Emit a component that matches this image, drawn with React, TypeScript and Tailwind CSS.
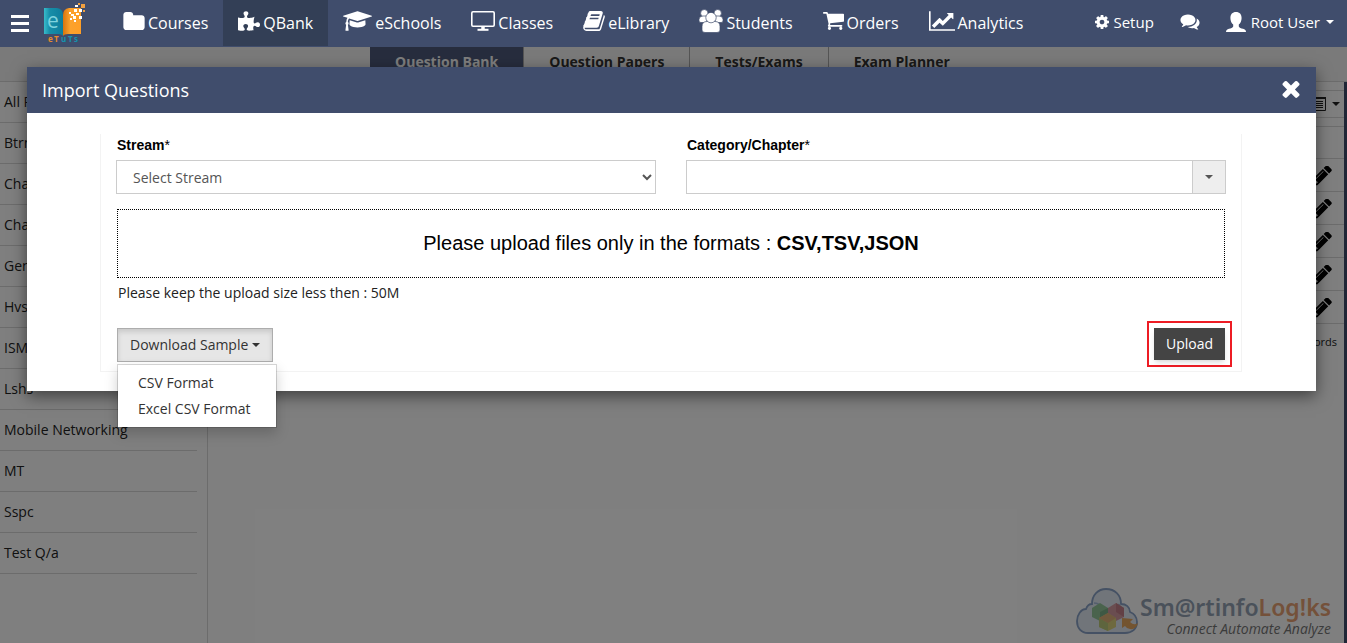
import type { ReactNode } from 'react'
import { FaPuzzlePiece } from 'react-icons/fa'

const paths = {
    folder: 'M1728 608v704q0 92-66 158t-158 66h-1216q-92 0-158-66t-66-158v-960q0-92 66-158t158-66h320q92 0 158 66t66 158v32h672q92 0 158 66t66 158z',
    school: 'M1774 836l18 316q4 69-82 128t-235 93.5-323 34.5-323-34.5-235-93.5-82-128l18-316 574 181q22 7 48 7t48-7zm530-324q0 23-22 31l-1120 352q-4 1-10 1t-10-1l-652-206q-43 34-71 111.5t-34 178.5q63 36 63 109 0 69-58 107l58 433q2 14-8 25-9 11-24 11h-192q-15 0-24-11-10-11-8-25l58-433q-58-38-58-107 0-73 65-111 11-207 98-330l-333-104q-22-8-22-31t22-31l1120-352q4-1 10-1t10 1l1120 352q22 8 22 31z',
    book: 'M1639 478q40 57 18 129l-275 906q-19 64-76.5 107.5t-122.5 43.5h-923q-77 0-148.5-53.5t-99.5-131.5q-24-67-2-127 0-4 3-27t4-37q1-8-3-21.5t-3-19.5q2-11 8-21t16.5-23.5 16.5-23.5q23-38 45-91.5t30-91.5q3-10 .5-30t-.5-28q3-11 17-28t17-23q21-36 42-92t25-90q1-9-2.5-32t.5-28q4-13 22-30.5t22-22.5q19-26 42.5-84.5t27.5-96.5q1-8-3-25.5t-2-26.5q2-8 9-18t18-23 17-21q8-12 16.5-30.5t15-35 16-36 19.5-32 26.5-23.5 36-11.5 47.5 5.5l-1 3q38-9 51-9h761q74 0 114 56t18 130l-274 906q-36 119-71.5 153.5t-128.5 34.5h-869q-27 0-38 15-11 16-1 43 24 70 144 70h923q29 0 56-15.5t35-41.5l300-987q7-22 5-57 38 15 59 43zm-1064 2q-4 13 2 22.5t20 9.5h608q13 0 25.5-9.5t16.5-22.5l21-64q4-13-2-22.5t-20-9.5h-608q-13 0-25.5 9.5t-16.5 22.5zm-83 256q-4 13 2 22.5t20 9.5h608q13 0 25.5-9.5t16.5-22.5l21-64q4-13-2-22.5t-20-9.5h-608q-13 0-25.5 9.5t-16.5 22.5z',
    cart: 'M704 1536q0 52-38 90t-90 38-90-38-38-90 38-90 90-38 90 38 38 90zm896 0q0 52-38 90t-90 38-90-38-38-90 38-90 90-38 90 38 38 90zm128-1088v512q0 24-16.5 42.5t-40.5 21.5l-1044 122q13 60 13 70 0 16-24 64h920q26 0 45 19t19 45-19 45-45 19h-1024q-26 0-45-19t-19-45q0-11 8-31.5t16-36 21.5-40 15.5-29.5l-177-823h-204q-26 0-45-19t-19-45 19-45 45-19h256q16 0 28.5 6.5t19.5 15.5 13 24.5 8 26 5.5 29.5 4.5 26h1201q26 0 45 19t19 45z',
    chart: 'M2048 1536v128h-2048v-1536h128v1408h1920zm-128-1248v435q0 21-19.5 29.5t-35.5-7.5l-121-121-633 633q-10 10-23 10t-23-10l-233-233-416 416-192-192 585-585q10-10 23-10t23 10l233 233 464-464-121-121q-16-16-7.5-35.5t29.5-19.5h435q14 0 23 9t9 23z',
    cog: 'M1152 896q0-106-75-181t-181-75-181 75-75 181 75 181 181 75 181-75 75-181zm512-109v222q0 12-8 23t-20 13l-185 28q-19 54-39 91 35 50 107 138 10 12 10 25t-9 23q-27 37-99 108t-94 71q-12 0-26-9l-138-108q-44 23-91 38-16 136-29 186-7 28-36 28h-222q-14 0-24.5-8.5t-11.5-21.5l-28-184q-49-16-90-37l-141 107q-10 9-25 9-14 0-25-11-126-114-165-168-7-10-7-23 0-12 8-23 15-21 51-66.5t54-70.5q-27-50-41-99l-183-27q-13-2-21-12.5t-8-23.5v-222q0-12 8-23t19-13l186-28q14-46 39-92-40-57-107-138-10-12-10-24 0-10 9-23 26-36 98.5-107.5t94.5-71.5q13 0 26 10l138 107q44-23 91-38 16-136 29-186 7-28 36-28h222q14 0 24.5 8.5t11.5 21.5l28 184q49 16 90 37l142-107q9-9 24-9 13 0 25 10 129 119 165 170 7 8 7 22 0 12-8 23-15 21-51 66.5t-54 70.5q26 50 41 98l183 28q13 2 21 12.5t8 23.5z',
    comments: 'M1408 768q0 139-94 257t-256.5 186.5-353.5 68.5q-86 0-176-16-124 88-278 128-36 9-86 16h-3q-11 0-20.5-8t-11.5-21q-1-3-1-6.5t.5-6.5 2-6l2.5-5 3.5-5.5 4-5 4.5-5 4-4.5q5-6 23-25t26-29.5 22.5-29 25-38.5 20.5-44q-124-72-195-177t-71-224q0-139 94-257t256.5-186.5 353.5-68.5 353.5 68.5 256.5 186.5 94 257zm384 256q0 120-71 224.5t-195 176.5q10 24 20.5 44t25 38.5 22.5 29 26 29.5 23 25q1 1 4 4.5t4.5 5 4 5 3.5 5.5l2.5 5 2 6 .5 6.5-1 6.5q-3 14-13 22t-22 7q-50-7-86-16-154-40-278-128-90 16-176 16-271 0-472-132 58 4 88 4 161 0 309-45t264-129q125-92 192-212t67-254q0-77-23-152 129 71 204 178t75 230z',
    times: 'M1490 1322q0 40-28 68l-136 136q-28 28-68 28t-68-28l-294-294-294 294q-28 28-68 28t-68-28l-136-136q-28-28-28-68t28-68l294-294-294-294q-28-28-28-68t28-68l136-136q28-28 68-28t68 28l294 294 294-294q28-28 68-28t68 28l136 136q28 28 28 68t-28 68l-294 294 294 294q28 28 28 68z',
    pencil: 'M491 1536l91-91-235-235-91 91v107h128v128h107zm523-928q0-22-22-22-10 0-17 7l-542 542q-7 7-7 17 0 22 22 22 10 0 17-7l542-542q7-7 7-17zm-54-192l416 416-832 832h-416v-416zm683 96q0 53-37 90l-166 166-416-416 166-165q36-38 90-38 53 0 91 38l235 234q37 39 37 91z',
}

const Glyph = ({ d, box, className }: { d: string; box: string; className: string }) => (
    <svg viewBox={box} className={className} fill="currentColor" aria-hidden="true">
        <path d={d} />
    </svg>
)

const Caret = () => (
    <svg viewBox="0 0 8 4" className="h-1 w-2 shrink-0" fill="currentColor" aria-hidden="true">
        <path d="M0 0h8L4 4z" />
    </svg>
)

const Monitor = () => (
    <svg viewBox="0 0 24 20" className="h-5 w-6" fill="none" stroke="currentColor" aria-hidden="true">
        <rect x="0.8" y="0.8" width="22.4" height="14.4" rx="1.2" strokeWidth="1.6" />
        <path d="M12 15v3.5" strokeWidth="3.5" />
        <path d="M6.500 18.800h11" strokeWidth="2" />
    </svg>
)

const People = () => (
    <svg viewBox="0 0 24 24" className="h-6 w-6" fill="currentColor" stroke="#404d6c" strokeWidth="0.7" aria-hidden="true">
        <circle cx="5.3" cy="4.2" r="3.7" />
        <circle cx="18.7" cy="4.2" r="3.7" />
        <path d="M0 12V10.500q0-3.500 4-3.500h4v6.500H2q-2 0-2-1.500z" />
        <path d="M24 12V10.500q0-3.500-4-3.500h-4v6.500h6q2 0 2-1.500z" />
        <path d="M3 21v-3.500q0-5 5-5h8q5 0 5 5V21q0 2.500-3 2.500H6q-3 0-3-2.500z" />
        <circle cx="12" cy="8.600" r="5.200" />
    </svg>
)

const UserBust = () => (
    <svg viewBox="0 0 20 20" className="h-5 w-5" fill="currentColor" aria-hidden="true">
        <path d="M10 0c3.600 0 5.600 2.300 5.600 6 0 3-1.200 5.200-2.800 6.600v1.800c.3 1.300 2.400 1.700 4.200 2.400 2 .7 3 1.500 3 3.200H0c0-1.700 1-2.500 3-3.200 1.800-.7 3.900-1.100 4.200-2.400v-1.800C5.600 11.200 4.400 9 4.400 6 4.400 2.300 6.400 0 10 0z" />
    </svg>
)

const Logo = () => (
    <svg viewBox="0 0 44 42" className="h-[42px] w-11" role="img" aria-label="eTuTs">
        <defs>
            <linearGradient id="teal" x1="0" x2="1">
                <stop offset="0" stopColor="#38bccb" />
                <stop offset="0.3" stopColor="#178ea8" />
                <stop offset="1" stopColor="#0e7d9c" />
            </linearGradient>
            <linearGradient id="orange" x1="0" x2="1">
                <stop offset="0" stopColor="#d9740e" />
                <stop offset="0.4" stopColor="#fba22e" />
                <stop offset="1" stopColor="#ff9f26" />
            </linearGradient>
        </defs>
        <path d="M0 5h13q6 1 6 7v21q-1-2-5-2H0z" fill="url(#teal)" />
        <path d="M19 33V12q0-6 6-7h12v26H24q-4 0-5 2z" fill="url(#orange)" />
        <text x="3" y="25" fontSize="21" fill="#7fd3de" fontFamily="Open Sans, sans-serif">e</text>
        <path
            d="M25 9h2v2h-2zM30 6h3v3h-3zM27 11h3v2h-3zM32 10h3v2h-3zM29 13h3v3h-3zM35 13h3v3h-3zM31 2h3v2h-3zM35 6h3v3h-3zM30 17h2v2h-2zM26 15h2v2h-2z"
            fill="#fff"
        />
        <path d="M37 1h4v4h-4zM34 0h2v2h-2zM39 7h2v2h-2z" fill="#f0a040" />
        <g fontSize="8" fontWeight="700" fontFamily="Open Sans, sans-serif">
            <text y="39">
                <tspan x="4" fill="#e98b2a">e</tspan>
                <tspan x="10" fill="#e98b2a">T</tspan>
                <tspan x="17" fill="#1592ad">u</tspan>
                <tspan x="24" fill="#1592ad">T</tspan>
                <tspan x="30" fill="#1592ad">s</tspan>
            </text>
        </g>
    </svg>
)

const CloudMark = () => (
    <svg viewBox="0 0 62 48" className="mb-1 h-12 w-[62px]" aria-hidden="true">
        <path
            d="M12 46C5 46 1 41 1 34c0-6 4-12 9-12 1-3 3-5 6-5 0-9 6-15 14-15 9 0 15 6 15 15 5 0 9 3 9 8 5 2 7 6 7 10 0 7-5 11-12 11z"
            fill="#e2eaf4"
            stroke="#8aa3c8"
            strokeWidth="1.800"
        />
        <path d="M18 16c3 0 5 1 6 3M45 18c-3-1-6 0-7 2" fill="none" stroke="#a9bddb" strokeWidth="1.500" />
        <path d="M16 21l8-5 8 5v9l-8 4-8-4z" fill="#94c79a" />
        <path d="M24 25l8-4v9l-8 4z" fill="#7db089" />
        <path d="M32 21l8-5 8 5v9l-8 4-8-4z" fill="#d49ba0" />
        <path d="M40 16l8 5v9l-8-5z" fill="#c4808a" />
        <path d="M23 31l9-5 8 5v9l-8 4-9-4z" fill="#dcd27c" />
        <path d="M23 31l9 5v8l-9-4z" fill="#bccb7c" />
        <path d="M32 26l8 5-8 5-9-5z" fill="#e0b27a" />
        <path d="M46 31l11 1-3 3q4 4 8 1-2 7-8 6-3 0-5-3l-3 2z" fill="#e6a860" />
    </svg>
)

const menu: { title: string; icon: ReactNode; active?: boolean }[] = [
    { title: 'Courses', icon: <Glyph d={paths.folder} box="64 128 1664 1408" className="h-[18px] w-[22px]" /> },
    { title: 'QBank', icon: <FaPuzzlePiece className="h-[22px] w-[22px]" />, active: true },
    { title: 'eSchools', icon: <Glyph d={paths.school} box="0 128 2304 1536" className="h-5 w-[29px]" /> },
    { title: 'Classes', icon: <Monitor /> },
    { title: 'eLibrary', icon: <Glyph d={paths.book} box="0 128 1664 1536" className="h-5 w-[22px]" /> },
    { title: 'Students', icon: <People /> },
    { title: 'Orders', icon: <Glyph d={paths.cart} box="64 256 1664 1408" className="h-[18px] w-[21px]" /> },
    { title: 'Analytics', icon: <Glyph d={paths.chart} box="0 128 2048 1536" className="h-5 w-[26px]" /> },
]

const tabs = ['Question Bank', 'Question Papers', 'Tests/Exams', 'Exam Planner']

const streams = ['All Papers', 'Btrn', 'Chapter', 'Chapter 2', 'General', 'Hvs', 'ISM', 'Lshs', 'Mobile Networking', 'MT', 'Sspc', 'Test Q/a']

const App = () => {
    return (
        <div className="relative flex min-h-screen flex-col bg-white font-['Open_Sans',sans-serif] text-sm text-[#222]">
            <header className="relative z-20 flex h-[47px] items-center bg-[#404d6c] text-white">
                <button type="button" aria-label="Menu" className="ml-[11px] flex w-[18px] flex-col gap-1">
                    <span className="h-[3px] bg-white" />
                    <span className="h-[3px] bg-white" />
                    <span className="h-[3px] bg-white" />
                </button>
                <a href="#home" className="ml-[15px]">
                    <Logo />
                </a>
                <nav className="ml-5 flex h-full text-base">
                    {menu.map((item) => (
                        <a
                            key={item.title}
                            href="#menu"
                            className={`flex h-[46px] items-center gap-[3px] px-[15px] ${item.active ? 'bg-[#333f56]' : ''}`}
                        >
                            <span className="pb-1">{item.icon}</span>
                            {item.title}
                        </a>
                    ))}
                </nav>
                <div className="ml-auto flex items-center pr-[13px] pb-0.5 text-[15px]">
                    <a href="#setup" className="flex items-center gap-1">
                        <Glyph d={paths.cog} box="128 128 1536 1536" className="h-3.5 w-3.5" />
                        Setup
                    </a>
                    <a href="#chat" aria-label="Messages" className="ml-[26px]">
                        <Glyph d={paths.comments} box="0 200 1792 1500" className="h-4 w-5" />
                    </a>
                    <button type="button" className="ml-[26px] flex items-center">
                        <UserBust />
                        <span className="mr-1.5 ml-[5px]">Root User</span>
                        <Caret />
                    </button>
                </div>
            </header>

            <div className="flex h-[35px] justify-center border-b border-[#d8d8d8] bg-[#f5f5f5] pr-0.5 font-bold">
                {tabs.map((tab, i) => (
                    <a
                        key={tab}
                        href="#tab"
                        className={`px-[25px] pt-[5px] ${i === 0 ? 'bg-[#4e5b7c] text-white' : 'border-l border-[#aaa] text-[#333]'}`}
                    >
                        {tab}
                    </a>
                ))}
            </div>

            <div className="flex grow">
                <aside className="w-52 border-r border-[#d8d8d8] pr-2.5">
                    <ul>
                        {streams.map((s) => (
                            <li key={s} className="h-[41px] border-b border-[#d8d8d8] pt-2.5 pl-1 leading-5">
                                <a href="#stream">{s}</a>
                            </li>
                        ))}
                    </ul>
                </aside>
                <main className="flex grow flex-col border-r-[3px] border-[#404d6c] pt-2">
                    <div className="flex h-7 items-center justify-end gap-1.5 border-y border-[#d8d8d8] pr-1">
                        <svg viewBox="0 0 16 14" className="h-3.5 w-4" fill="none" stroke="currentColor" aria-hidden="true">
                            <path d="M0.500 1h15v12.500H0.500z" />
                            <path d="M0 1h16" strokeWidth="2" />
                            <path d="M3 4.500h2M6 4.500h7M3 6.500h2M6 6.500h7M3 8.500h2M6 8.500h7M3 10.500h2M6 10.500h7" />
                        </svg>
                        <Caret />
                    </div>
                    <div className="mt-2 h-[33px] border-y border-[#d8d8d8]" />
                    {[1, 2, 3, 4, 5].map((row) => (
                        <div key={row} className="flex h-[33px] items-center justify-end border-b border-[#d8d8d8] pr-3">
                            <button type="button" aria-label="Edit question" className="pt-0.5 text-black">
                                <Glyph d={paths.pencil} box="128 256 1536 1408" className="h-5 w-5" />
                            </button>
                        </div>
                    ))}
                    <p className="pt-2.5 pr-[7px] text-right text-[11px]">5 Records</p>
                    <div className="mt-auto flex items-end justify-end pr-[13px] pb-1">
                        <CloudMark />
                        <div className="ml-0.5 text-right">
                            <p className="font-['Noto_Sans',sans-serif] text-[23px] leading-6 font-semibold text-[#94a3b4]">
                                Sm@rtinfo<span className="text-[#e8a274]">Log!ks</span>
                            </p>
                            <p className="text-sm leading-5 italic text-[#777]">Connect Automate Analyze</p>
                        </div>
                    </div>
                </main>
            </div>

            <div className="absolute inset-0 z-10 bg-black/50" />

            <div
                role="dialog"
                aria-labelledby="import-title"
                className="absolute top-[67px] right-[31px] left-[27px] z-30 bg-white shadow-[0_5px_15px_rgba(0,0,0,0.5)]"
            >
                <div className="flex h-[46px] items-center justify-between bg-[#404d6c] pr-4 pl-[15px] text-white">
                    <h4 id="import-title" className="text-lg">Import Questions</h4>
                    <button type="button" aria-label="Close" className="pb-0.5">
                        <Glyph d={paths.times} box="302 302 1188 1252" className="h-[18px] w-[18px]" />
                    </button>
                </div>
                <div className="pt-[21px] pr-[74px] pb-[19px] pl-[73px]">
                    <form className="border-x border-b border-[#f3f3f3] px-[15px] pb-1">
                        <div className="grid grid-cols-2 gap-[30px] font-['Liberation_Sans',sans-serif] text-black">
                            <div>
                                <label htmlFor="stream" className="block pl-px leading-[22px]">
                                    <b>Stream</b>*
                                </label>
                                <select
                                    id="stream"
                                    className="mt-1 block h-[34px] w-full border border-[#ccc] bg-white px-3 font-['Open_Sans',sans-serif] text-[#555]"
                                >
                                    <option>Select Stream</option>
                                </select>
                            </div>
                            <div>
                                <label htmlFor="category" className="block pl-px leading-[22px]">
                                    <b>Category/Chapter</b>*
                                </label>
                                <div className="mt-1 flex h-[34px] border border-[#ccc]">
                                    <input id="category" type="text" className="min-w-0 grow px-3 outline-none" />
                                    <button
                                        type="button"
                                        aria-label="Choose category"
                                        className="flex w-[33px] items-center justify-center border-l border-[#ccc] bg-[#eee] text-[#555]"
                                    >
                                        <Caret />
                                    </button>
                                </div>
                            </div>
                        </div>
                        <div className="mx-px mt-[15px] flex h-[69px] items-center justify-center border border-dotted border-black pb-0.5 font-['Liberation_Sans',sans-serif] text-xl text-black">
                            <p>
                                Please upload files only in the formats : <b>CSV,TSV,JSON</b>
                            </p>
                        </div>
                        <p className="mt-[5px] pl-0.5 leading-5">Please keep the upload size less then : 50M</p>
                        <div className="mt-[18px] flex items-end justify-between pl-px">
                            <div className="relative pb-[5px]">
                                <button
                                    type="button"
                                    aria-expanded="true"
                                    className="flex h-[34px] items-center gap-1 border border-[#adadad] bg-[#e6e6e6] px-3 text-[#333] shadow-[inset_0_3px_5px_rgba(0,0,0,0.125)]"
                                >
                                    Download Sample
                                    <Caret />
                                </button>
                                <ul className="absolute top-9 left-0 w-40 border border-black/15 bg-white bg-clip-padding py-[5px] text-[#333] shadow-[0_6px_12px_rgba(0,0,0,0.175)]">
                                    <li>
                                        <a href="#csv" className="block px-5 py-[3px] leading-5">CSV Format</a>
                                    </li>
                                    <li>
                                        <a href="#excel" className="block px-5 py-[3px] leading-5">Excel CSV Format</a>
                                    </li>
                                </ul>
                            </div>
                            <div className="-mr-[6px] border-2 border-[#ed1c24] p-[5px]">
                                <button type="button" className="block h-8 bg-[#444] px-3 text-white shadow-md">
                                    Upload
                                </button>
                            </div>
                        </div>
                    </form>
                </div>
            </div>
        </div>
    )
}

export default App
